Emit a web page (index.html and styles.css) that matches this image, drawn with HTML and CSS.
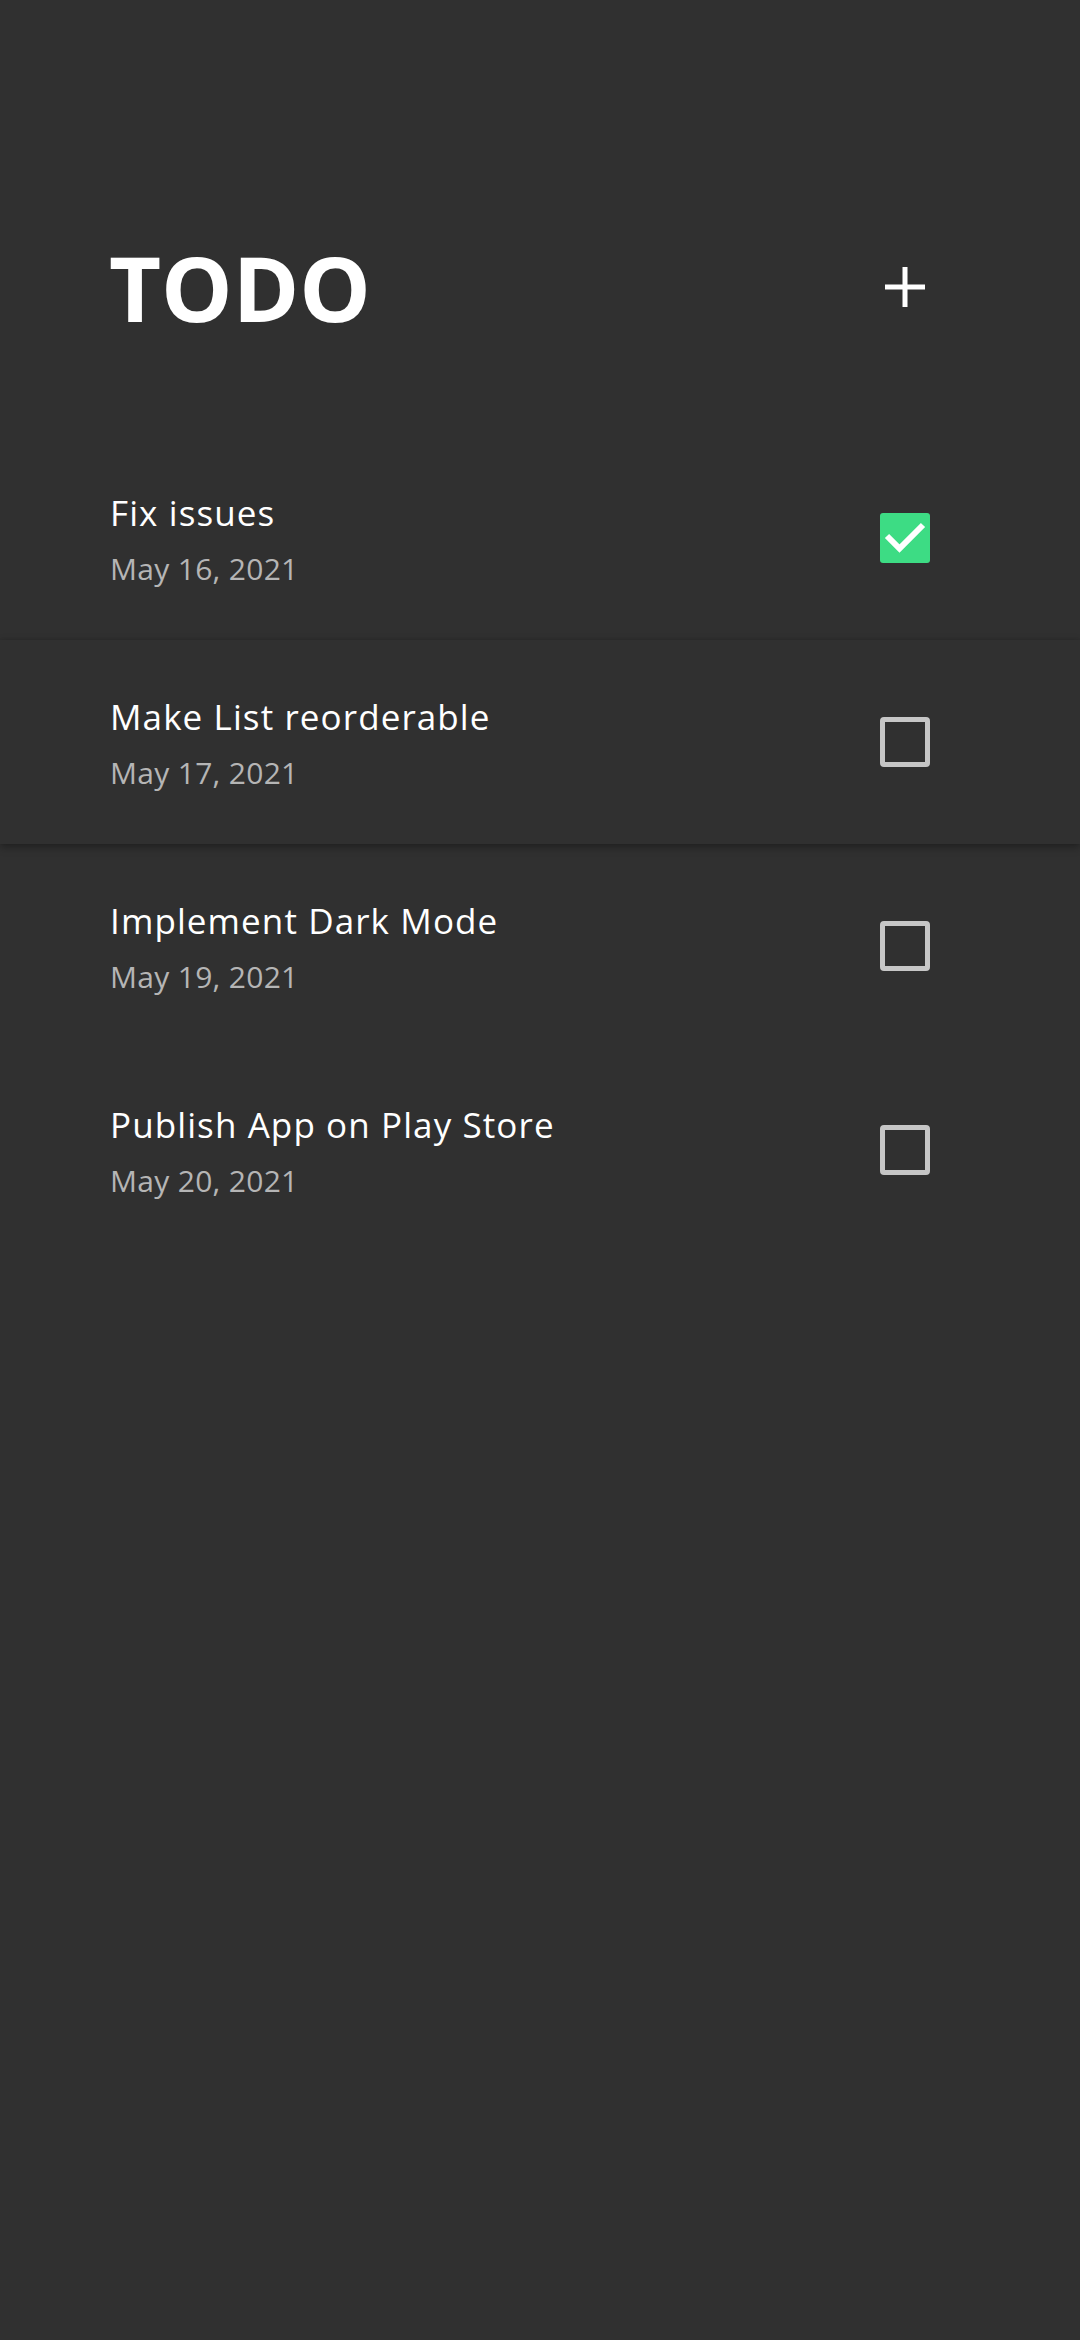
FILE: index.html
```html
<!DOCTYPE html>
<html>
<head>
<meta charset="utf-8">
<link rel="stylesheet" href="styles.css">
</head>
<body>
<div class="app">
  <header class="header">
    <h1 class="title">TODO</h1>
    <button class="add" aria-label="Add">
      <svg width="40" height="40" viewBox="0 0 40 40"><path d="M20 0V40M0 20H40" stroke="#fff" stroke-width="5" fill="none"/></svg>
    </button>
  </header>
  <ul class="list">
    <li class="row">
      <div class="text"><div class="name">Fix issues</div><div class="date">May 16, 2021</div></div>
      <span class="box checked"><svg width="50" height="50" viewBox="0 0 50 50"><path d="M7 23L19.5 35.5L43 12" stroke="#fff" stroke-width="6" fill="none"/></svg></span>
    </li>
    <li class="row dragging">
      <div class="text"><div class="name">Make List reorderable</div><div class="date">May 17, 2021</div></div>
      <span class="box"></span>
    </li>
    <li class="row">
      <div class="text"><div class="name">Implement Dark Mode</div><div class="date">May 19, 2021</div></div>
      <span class="box"></span>
    </li>
    <li class="row">
      <div class="text"><div class="name">Publish App on Play Store</div><div class="date">May 20, 2021</div></div>
      <span class="box"></span>
    </li>
  </ul>
</div>
</body>
</html>
```
FILE: styles.css
```css
html, body {
  margin: 0;
  padding: 0;
  background: #303030;
}
body {
  width: 1080px;
  height: 2340px;
  font-family: "Open Sans", "Noto Sans", sans-serif;
  color: #fff;
}
.header {
  display: flex;
  align-items: center;
  justify-content: space-between;
  height: 120px;
  margin-top: 227px;
  padding: 0 155px 0 109px;
}
.title {
  margin: 0;
  font-size: 90px;
  font-weight: 700;
  line-height: 120px;
  letter-spacing: 0;
}
.add {
  background: none;
  border: 0;
  padding: 0;
  width: 40px;
  height: 40px;
  display: block;
}
.add svg { display: block; }
.list {
  list-style: none;
  margin: 89px 0 0;
  padding: 0;
}
.row {
  height: 204px;
  box-sizing: border-box;
  display: flex;
  align-items: center;
  justify-content: space-between;
  padding: 0 150px 0 110px;
  background: #303030;
  position: relative;
}
.dragging {
  z-index: 1;
  box-shadow: 0 3px 8px rgba(0,0,0,0.35), 0 -1px 2px rgba(0,0,0,0.06);
}
.text {
  display: flex;
  flex-direction: column;
  padding-top: 4px;
}
.name {
  font-size: 35px;
  line-height: 48px;
  letter-spacing: 1.1px;
  color: #fff;
}
.date {
  font-size: 30px;
  line-height: 44px;
  margin-top: 10px;
  letter-spacing: 0.3px;
  color: #b5b5b5;
}
.box {
  width: 50px;
  height: 50px;
  box-sizing: border-box;
  border: 5px solid #c6c6c6;
  border-radius: 4px;
  display: block;
}
.box.checked {
  border: 0;
  background: #3ddc84;
  border-radius: 3px;
}
.box svg { display: block; }
```
